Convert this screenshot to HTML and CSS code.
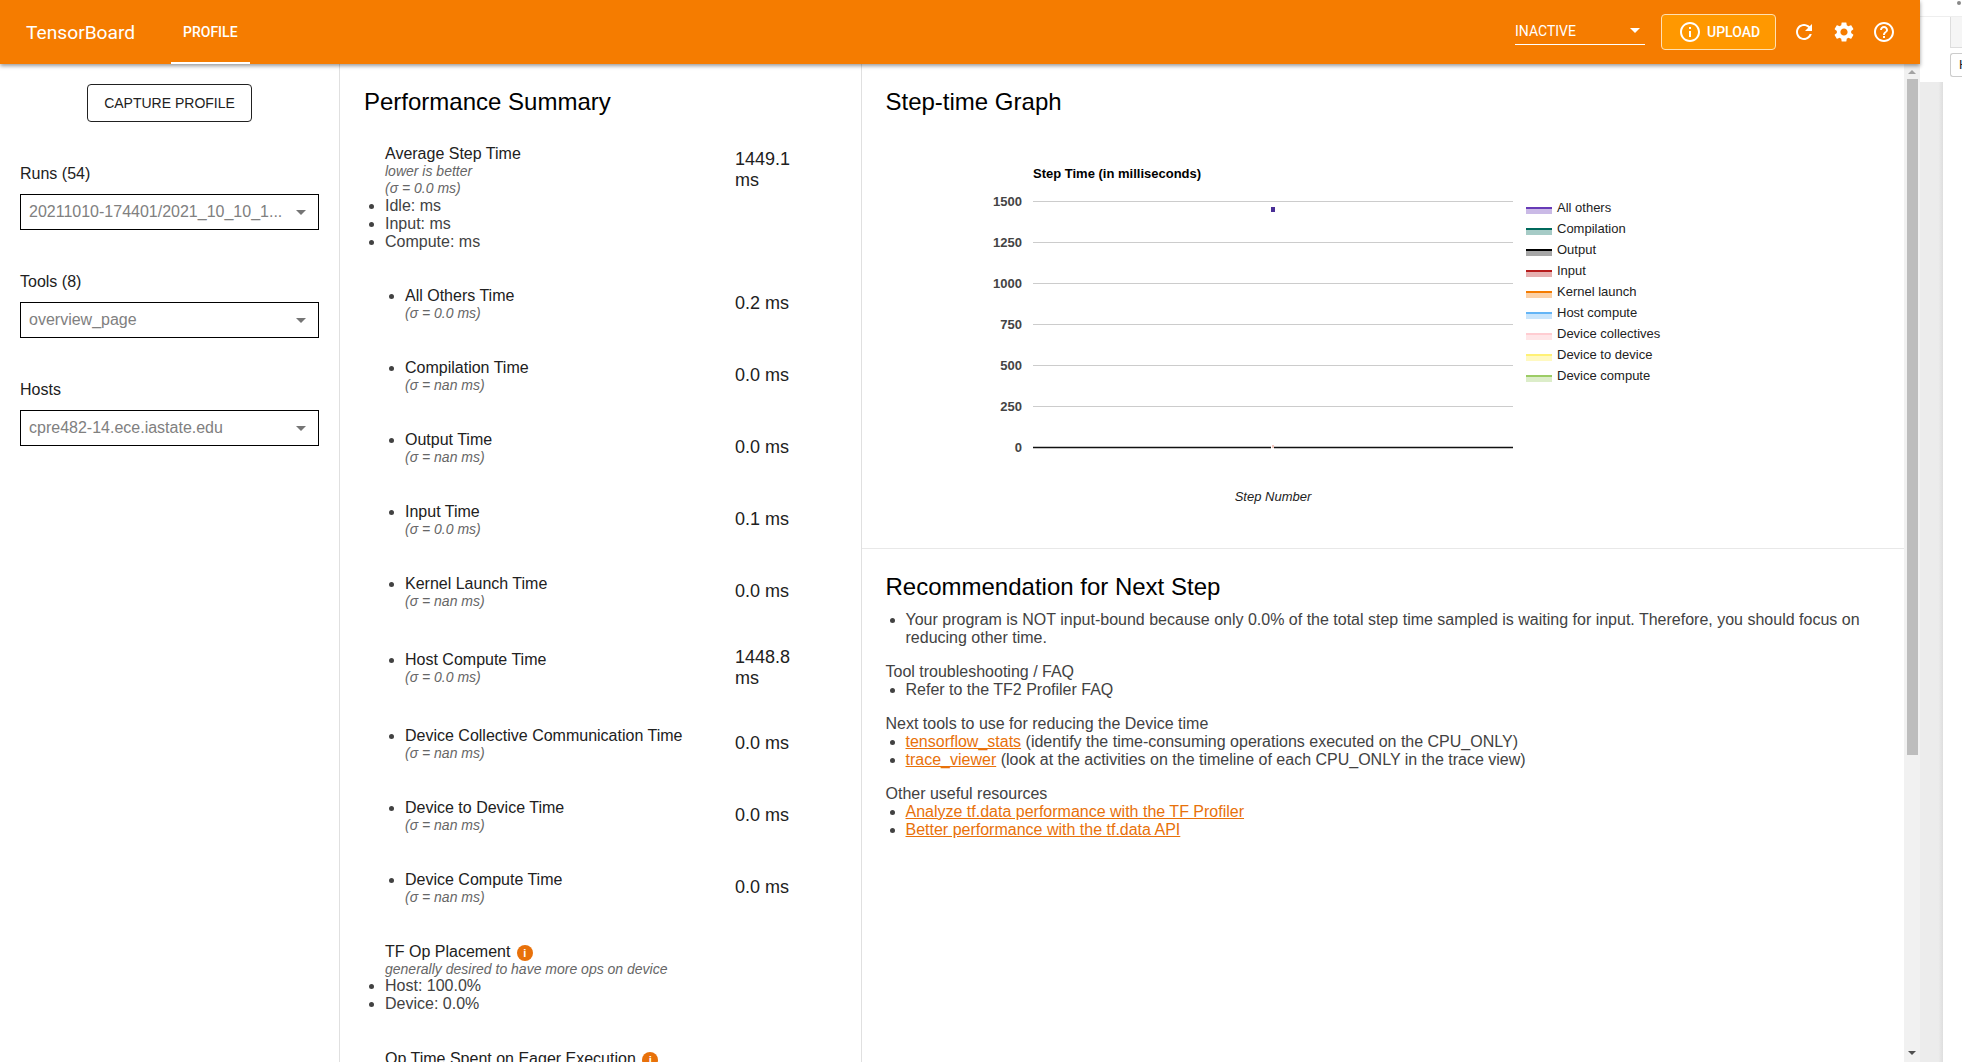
FILE: index.html
```html
<!DOCTYPE html>
<html lang="en">
   <head>
      <meta charset="UTF-8">
      <title>TensorBoard</title>
      <link rel="stylesheet" href="styles.css">
   </head>
   <body>
      <div class="window">
         <header class="toolbar">
            <span class="brand">TensorBoard</span>
            <a class="tab">PROFILE</a>
            <div class="toolbar-right">
               <div class="status-select">
                  <span>INACTIVE</span>
                  <i class="caret caret-white"></i>
               </div>
               <button class="upload">
                  <svg class="icon" viewBox="0 0 24 24"><path d="M11 7h2v2h-2zm0 4h2v6h-2zm1-9C6.48 2 2 6.48 2 12s4.48 10 10 10 10-4.48 10-10S17.52 2 12 2zm0 18c-4.41 0-8-3.59-8-8s3.59-8 8-8 8 3.59 8 8-3.59 8-8 8z"/></svg>
                  <span>UPLOAD</span>
               </button>
               <svg class="icon tool" viewBox="0 0 24 24"><path d="M17.65 6.35C16.2 4.9 14.21 4 12 4c-4.42 0-7.99 3.58-7.99 8s3.57 8 7.99 8c3.73 0 6.84-2.55 7.73-6h-2.08c-.82 2.33-3.04 4-5.65 4-3.31 0-6-2.69-6-6s2.69-6 6-6c1.66 0 3.14.69 4.22 1.78L13 11h7V4l-2.35 2.35z"/></svg>
               <svg class="icon tool" viewBox="0 0 24 24"><path d="M19.14 12.94c.04-.3.06-.61.06-.94 0-.32-.02-.64-.07-.94l2.03-1.58c.18-.14.23-.41.12-.61l-1.92-3.32c-.12-.22-.37-.29-.59-.22l-2.39.96c-.5-.38-1.03-.7-1.62-.94l-.36-2.54c-.04-.24-.24-.41-.48-.41h-3.84c-.24 0-.43.17-.47.41l-.36 2.54c-.59.24-1.13.57-1.62.94l-2.39-.96c-.22-.08-.47 0-.59.22L2.74 8.87c-.12.21-.08.47.12.61l2.03 1.58c-.05.3-.09.63-.09.94s.02.64.07.94l-2.03 1.58c-.18.14-.23.41-.12.61l1.92 3.32c.12.22.37.29.59.22l2.39-.96c.5.38 1.03.7 1.62.94l.36 2.54c.05.24.24.41.48.41h3.84c.24 0 .44-.17.47-.41l.36-2.54c.59-.24 1.13-.56 1.62-.94l2.39.96c.22.08.47 0 .59-.22l1.92-3.32c.12-.22.07-.47-.12-.61l-2.01-1.58zM12 15.6c-1.98 0-3.6-1.62-3.6-3.6s1.62-3.6 3.6-3.6 3.6 1.62 3.6 3.6-1.62 3.6-3.6 3.6z"/></svg>
               <svg class="icon tool" viewBox="0 0 24 24"><path d="M11 18h2v-2h-2v2zm1-16C6.48 2 2 6.48 2 12s4.48 10 10 10 10-4.48 10-10S17.52 2 12 2zm0 18c-4.41 0-8-3.59-8-8s3.59-8 8-8 8 3.59 8 8-3.59 8-8 8zm0-14c-2.21 0-4 1.79-4 4h2c0-1.1.9-2 2-2s2 .9 2 2c0 2-3 1.75-3 5h2c0-2.25 3-2.5 3-5 0-2.21-1.79-4-4-4z"/></svg>
            </div>
         </header>

         <div class="content">
            <aside class="sidebar">
               <button class="capture">CAPTURE PROFILE</button>
               <div class="field">
                  <label>Runs (54)</label>
                  <div class="select"><span>20211010-174401/2021_10_10_1...</span><i class="caret"></i></div>
               </div>
               <div class="field">
                  <label>Tools (8)</label>
                  <div class="select"><span>overview_page</span><i class="caret"></i></div>
               </div>
               <div class="field">
                  <label>Hosts</label>
                  <div class="select"><span>cpre482-14.ece.iastate.edu</span><i class="caret"></i></div>
               </div>
            </aside>

            <section class="summary">
               <h2>Performance Summary</h2>
               <div class="row row-first">
                  <div class="label">
                     <div class="title">Average Step Time</div>
                     <div class="note">lower is better</div>
                     <div class="note">(σ = 0.0 ms)</div>
                     <ul>
                        <li>Idle: ms</li>
                        <li>Input: ms</li>
                        <li>Compute: ms</li>
                     </ul>
                  </div>
                  <div class="value">1449.1 ms</div>
               </div>
               <div class="row">
                  <ul class="label item"><li><div class="title">All Others Time</div><div class="note">(σ = 0.0 ms)</div></li></ul>
                  <div class="value">0.2 ms</div>
               </div>
               <div class="row">
                  <ul class="label item"><li><div class="title">Compilation Time</div><div class="note">(σ = nan ms)</div></li></ul>
                  <div class="value">0.0 ms</div>
               </div>
               <div class="row">
                  <ul class="label item"><li><div class="title">Output Time</div><div class="note">(σ = nan ms)</div></li></ul>
                  <div class="value">0.0 ms</div>
               </div>
               <div class="row">
                  <ul class="label item"><li><div class="title">Input Time</div><div class="note">(σ = 0.0 ms)</div></li></ul>
                  <div class="value">0.1 ms</div>
               </div>
               <div class="row">
                  <ul class="label item"><li><div class="title">Kernel Launch Time</div><div class="note">(σ = nan ms)</div></li></ul>
                  <div class="value">0.0 ms</div>
               </div>
               <div class="row">
                  <ul class="label item"><li><div class="title">Host Compute Time</div><div class="note">(σ = 0.0 ms)</div></li></ul>
                  <div class="value value-long">1448.8 ms</div>
               </div>
               <div class="row">
                  <ul class="label item"><li><div class="title">Device Collective Communication Time</div><div class="note">(σ = nan ms)</div></li></ul>
                  <div class="value">0.0 ms</div>
               </div>
               <div class="row">
                  <ul class="label item"><li><div class="title">Device to Device Time</div><div class="note">(σ = nan ms)</div></li></ul>
                  <div class="value">0.0 ms</div>
               </div>
               <div class="row">
                  <ul class="label item"><li><div class="title">Device Compute Time</div><div class="note">(σ = nan ms)</div></li></ul>
                  <div class="value">0.0 ms</div>
               </div>
               <div class="block">
                  <div class="title">TF Op Placement <i class="info">i</i></div>
                  <div class="note">generally desired to have more ops on device</div>
                  <ul>
                     <li>Host: 100.0%</li>
                     <li>Device: 0.0%</li>
                  </ul>
               </div>
               <div class="block">
                  <div class="title">Op Time Spent on Eager Execution <i class="info">i</i></div>
               </div>
            </section>

            <main class="detail">
               <section class="graph">
                  <h2>Step-time Graph</h2>
                  <svg class="chart" viewBox="885 130 900 400">
                     <text class="chart-title" x="1033" y="178">Step Time (in milliseconds)</text>
                     <g class="grid">
                        <line x1="1033" x2="1513" y1="201.5" y2="201.5"/>
                        <line x1="1033" x2="1513" y1="242.5" y2="242.5"/>
                        <line x1="1033" x2="1513" y1="283.5" y2="283.5"/>
                        <line x1="1033" x2="1513" y1="324.5" y2="324.5"/>
                        <line x1="1033" x2="1513" y1="365.5" y2="365.5"/>
                        <line x1="1033" x2="1513" y1="406.5" y2="406.5"/>
                     </g>
                     <line class="axis" x1="1033" x2="1271" y1="447.5" y2="447.5"/>
                     <line class="axis" x1="1274" x2="1513" y1="447.5" y2="447.5"/>
                     <rect x="1271" y="207" width="4" height="5" fill="#4a2f96"/>
                     <rect x="1272" y="445" width="2" height="3" fill="#f3c6bd"/>
                     <g class="ticks">
                        <text x="1022" y="206">1500</text>
                        <text x="1022" y="247">1250</text>
                        <text x="1022" y="288">1000</text>
                        <text x="1022" y="329">750</text>
                        <text x="1022" y="370">500</text>
                        <text x="1022" y="411">250</text>
                        <text x="1022" y="452">0</text>
                     </g>
                     <text class="x-title" x="1273" y="501">Step Number</text>
                     <g class="legend">
                        <rect x="1526" y="207" width="26" height="7" fill="#673ab7" opacity=".35"/><rect x="1526" y="207" width="26" height="2" fill="#673ab7"/><text x="1557" y="212">All others</text>
                        <rect x="1526" y="228" width="26" height="7" fill="#00695c" opacity=".35"/><rect x="1526" y="228" width="26" height="2" fill="#00695c"/><text x="1557" y="233">Compilation</text>
                        <rect x="1526" y="249" width="26" height="7" fill="#000" opacity=".35"/><rect x="1526" y="249" width="26" height="2" fill="#000"/><text x="1557" y="254">Output</text>
                        <rect x="1526" y="270" width="26" height="7" fill="#b71c1c" opacity=".35"/><rect x="1526" y="270" width="26" height="2" fill="#b71c1c"/><text x="1557" y="275">Input</text>
                        <rect x="1526" y="291" width="26" height="7" fill="#f57c00" opacity=".35"/><rect x="1526" y="291" width="26" height="2" fill="#f57c00"/><text x="1557" y="296">Kernel launch</text>
                        <rect x="1526" y="312" width="26" height="7" fill="#64b5f6" opacity=".35"/><rect x="1526" y="312" width="26" height="2" fill="#64b5f6"/><text x="1557" y="317">Host compute</text>
                        <rect x="1526" y="333" width="26" height="7" fill="#ffcdd2" opacity=".5"/><rect x="1526" y="333" width="26" height="2" fill="#ffcdd2"/><text x="1557" y="338">Device collectives</text>
                        <rect x="1526" y="354" width="26" height="7" fill="#fff176" opacity=".45"/><rect x="1526" y="354" width="26" height="2" fill="#fff176"/><text x="1557" y="359">Device to device</text>
                        <rect x="1526" y="375" width="26" height="7" fill="#9ccc65" opacity=".35"/><rect x="1526" y="375" width="26" height="2" fill="#9ccc65"/><text x="1557" y="380">Device compute</text>
                     </g>
                  </svg>
               </section>
               <section class="recommendation">
                  <h2>Recommendation for Next Step</h2>
                  <ul>
                     <li>Your program is NOT input-bound because only 0.0% of the total step time sampled is waiting for input. Therefore, you should focus on reducing other time.</li>
                  </ul>
                  <div class="group">Tool troubleshooting / FAQ</div>
                  <ul>
                     <li>Refer to the TF2 Profiler FAQ</li>
                  </ul>
                  <div class="group">Next tools to use for reducing the Device time</div>
                  <ul>
                     <li><a href="#">tensorflow_stats</a> (identify the time-consuming operations executed on the CPU_ONLY)</li>
                     <li><a href="#">trace_viewer</a> (look at the activities on the timeline of each CPU_ONLY in the trace view)</li>
                  </ul>
                  <div class="group">Other useful resources</div>
                  <ul>
                     <li><a href="#">Analyze tf.data performance with the TF Profiler</a></li>
                     <li><a href="#">Better performance with the tf.data API</a></li>
                  </ul>
               </section>
            </main>

            <div class="scrollbar">
               <i class="arrow arrow-up"></i>
               <div class="thumb"></div>
               <i class="arrow arrow-down"></i>
            </div>
         </div>
      </div>

      <div class="backdrop">
         <div class="backdrop-top">
            <div class="dot-bar"><i class="dot"></i></div>
            <div class="mini-box"></div>
            <div class="mini-btn">H</div>
         </div>
         <div class="backdrop-bottom"></div>
      </div>
   </body>
</html>
```

FILE: styles.css
```css
/* Page frame */
body {
  margin: 0;
  height: 1062px;
  overflow: hidden;
  display: flex;
  font-family: "Liberation Sans", Arial, sans-serif;
  font-size: 16px;
  color: #424242;
  background-color: #fff;
}
.window {
  width: 1920px;
  flex: none;
  display: flex;
  flex-direction: column;
  height: 1062px;
}

/* Toolbar */
.toolbar {
  height: 64px;
  flex: none;
  display: flex;
  align-items: center;
  background-color: #f57c00;
  color: #fff;
  font-family: Roboto, sans-serif;
  box-shadow: 0 2px 4px rgba(0, 0, 0, 0.4);
  position: relative;
  padding-left: 26px;
  padding-right: 24px;
  box-sizing: border-box;
}
.brand {
  font-size: 19.2px;
  width: 145px;
}
.tab {
  font-size: 14px;
  font-weight: 500;
  height: 64px;
  line-height: 62px;
  padding: 1px 12px 0;
  box-sizing: border-box;
  border-bottom: 2px solid #fff;
}
.toolbar-right {
  margin-left: auto;
  display: flex;
  align-items: center;
}
.status-select {
  width: 130px;
  height: 27px;
  margin-top: -2px;
  margin-right: 16px;
  border-bottom: 1px solid #fff;
  font-size: 14px;
  display: flex;
  align-items: center;
  justify-content: space-between;
  padding-right: 5px;
  box-sizing: border-box;
}
.upload {
  width: 115px;
  height: 36px;
  display: flex;
  align-items: center;
  gap: 5px;
  padding: 0 0 0 16px;
  margin-right: 16px;
  margin-top: -1px;
  box-sizing: border-box;
  background-color: #ff9800;
  color: #fff;
  border: 1px solid #ffe0b2;
  border-radius: 4px;
  font-family: Roboto, sans-serif;
  font-size: 14px;
  font-weight: 500;
}
.icon {
  width: 24px;
  height: 24px;
  fill: #fff;
  flex: none;
}
.tool {
  margin-left: 16px;
}
.tool:first-of-type {
  margin-left: 0;
}
.caret {
  width: 0;
  height: 0;
  border-left: 5px solid transparent;
  border-right: 5px solid transparent;
  border-top: 5px solid #757575;
  flex: none;
}
.caret-white {
  border-top-color: #fff;
}

/* Main area */
.content {
  flex: 1;
  display: flex;
  min-height: 0;
  overflow: hidden;
}
.sidebar {
  width: 340px;
  flex: none;
  box-sizing: border-box;
  border-right: 1px solid #e0e0e0;
  padding: 20px 20px 0;
  font-family: Roboto, sans-serif;
  color: #212121;
}
.capture {
  display: block;
  width: 165px;
  height: 38px;
  margin: 0 0 0 67px;
  background-color: #fff;
  border: 1px solid #212121;
  border-radius: 4px;
  font-family: "Liberation Sans", sans-serif;
  font-size: 14px;
  color: #212121;
}
.field {
  margin-bottom: 42px;
}
.capture + .field {
  margin-top: 42px;
}
.field label {
  display: block;
  font-family: "Liberation Sans", sans-serif;
  font-size: 16px;
  line-height: 19px;
  margin-bottom: 11px;
}
.select {
  width: 299px;
  height: 36px;
  box-sizing: border-box;
  border: 1px solid #000;
  padding: 0 12px 0 8px;
  display: flex;
  align-items: center;
  gap: 10px;
  font-family: "Liberation Sans", sans-serif;
  color: #808080;
}
.select span {
  flex: 1;
  white-space: nowrap;
}

/* Performance summary */
.summary {
  width: 522px;
  flex: none;
  box-sizing: border-box;
  border-right: 1px solid #e0e0e0;
  padding: 24px 0 0 24px;
}
h2 {
  margin: 0;
  font-size: 24px;
  font-weight: 400;
  color: #000;
}
.summary h2 {
  margin-bottom: 29px;
}
.row {
  display: flex;
  align-items: center;
}
.row-first {
  align-items: flex-start;
  padding-bottom: 17px;
}
.label {
  width: 371px;
  flex: none;
  box-sizing: border-box;
}
.row-first .title,
.row-first .note,
.block .title,
.block .note {
  padding-left: 21px;
}
.title {
  color: #212121;
  line-height: 18px;
}
.note {
  font-size: 14px;
  line-height: 16px;
  font-style: italic;
  color: #666;
}
.row-first .note {
  line-height: 17px;
}
.value {
  width: 70px;
  font-size: 18px;
  line-height: 21px;
  color: #212121;
  padding: 18px 0 20px;
}
.value-long {
  padding: 19px 0;
}
.row-first .value {
  padding: 4px 0 0;
}
ul {
  margin: 0;
  padding: 0 0 0 21px;
  line-height: 18px;
}
ul.item {
  padding: 19px 0 19px 41px;
}
.block {
  padding: 19px 0 18px;
}
.info {
  display: inline-block;
  width: 16px;
  height: 16px;
  margin-left: 2px;
  border-radius: 50%;
  background-color: #e8710a;
  color: #fff;
  font-size: 11px;
  font-style: normal;
  font-weight: 700;
  line-height: 16px;
  text-align: center;
  vertical-align: 0;
}

/* Right column */
.detail {
  flex: 1;
  min-width: 0;
}
.graph {
  height: 485px;
  box-sizing: border-box;
  border-bottom: 1px solid #e8e8e8;
  padding: 24px 0 0 23.5px;
}
.chart {
  display: block;
  width: 900px;
  height: 400px;
  margin-top: 14px;
  margin-left: -.5px;
  font-family: "Liberation Sans", sans-serif;
  font-size: 13px;
}
.chart-title {
  font-weight: 700;
  fill: #000;
}
.grid line {
  stroke: #ccc;
}
.axis {
  stroke: #111;
  stroke-width: 1.5;
}
.ticks text {
  font-weight: 700;
  fill: #444;
  text-anchor: end;
}
.x-title {
  font-style: italic;
  fill: #222;
  text-anchor: middle;
}
.legend text {
  fill: #222;
}
.recommendation {
  padding: 24px 24px 0 23.5px;
}
.recommendation h2 {
  margin-bottom: 10px;
}
.group {
  margin-top: 16px;
  line-height: 18px;
}
.recommendation ul {
  padding-left: 20px;
}
.recommendation a {
  color: #e8710a;
}

/* Scrollbar */
.scrollbar {
  width: 16px;
  flex: none;
  background-color: #f1f1f1;
  display: flex;
  flex-direction: column;
  align-items: center;
  padding-top: 6px;
  box-sizing: border-box;
}
.arrow {
  width: 0;
  height: 0;
  border-left: 4px solid transparent;
  border-right: 4px solid transparent;
}
.arrow-up {
  border-bottom: 4px solid #a3a3a3;
}
.arrow-down {
  border-top: 4px solid #505050;
  margin-top: 296px;
}
.thumb {
  width: 11px;
  height: 676px;
  margin-top: 5px;
  background-color: #bdbdbd;
}

/* Other window showing behind */
.backdrop {
  flex: 1;
  display: flex;
  flex-direction: column;
  height: 1062px;
  overflow: hidden;
}
.backdrop-top {
  height: 82px;
  flex: none;
  box-sizing: border-box;
  background-color: #fff;
}
.dot-bar {
  height: 17px;
  box-sizing: border-box;
  border-bottom: 1px solid #eee;
}
.dot {
  display: block;
  width: 4px;
  height: 4px;
  margin-left: 37px;
  border-radius: 50%;
  background-color: #888;
  transform: translateY(1px);
}
.mini-box {
  height: 31px;
  margin-left: 30px;
  box-sizing: border-box;
  border-left: 1px solid #ddd;
  border-bottom: 1px solid #ddd;
  background-color: #f5f5f5;
}
.mini-btn {
  height: 24px;
  margin-top: 5px;
  margin-left: 30px;
  box-sizing: border-box;
  border: 1px solid #ccc;
  border-right: none;
  border-radius: 3px 0 0 3px;
  padding-left: 8px;
  font-size: 13px;
  line-height: 22px;
  color: #222;
}
.backdrop-bottom {
  flex: 1;
  width: 23px;
  background: linear-gradient(to right, #ececec 0, #ececec 80%, #dedede 100%);
}
```
